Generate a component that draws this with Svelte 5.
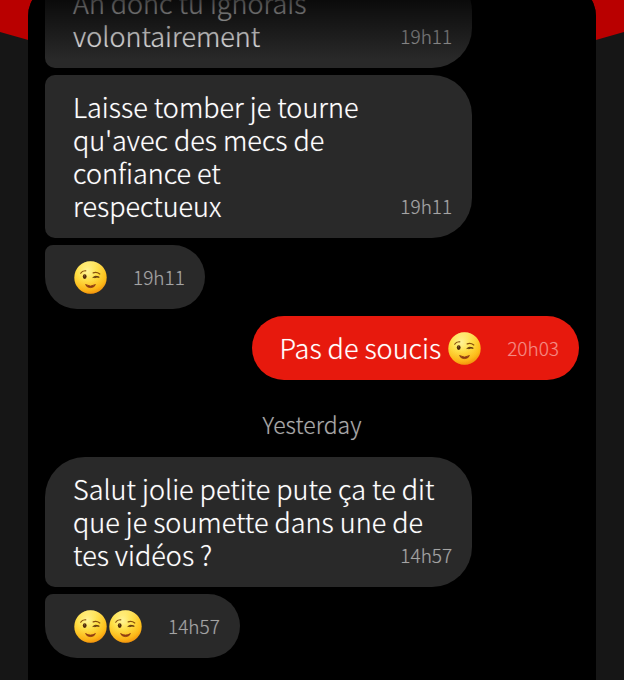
<script>
  const items = [
    { lines: ['Ah donc tu ignorais', 'volontairement'], time: '19h11', shape: 'middle' },
    { lines: ['Laisse tomber je tourne', "qu'avec des mecs de", 'confiance et', 'respectueux'], time: '19h11', shape: 'middle' },
    { lines: [''], winks: 1, time: '19h11', shape: 'last' },
    { lines: ['Pas de soucis'], winks: 1, time: '20h03', shape: 'sent' },
    { day: 'Yesterday' },
    { lines: ['Salut jolie petite pute ça te dit', 'que je soumette dans une de', 'tes vidéos ?'], time: '14h57', shape: 'first' },
    { lines: [''], winks: 2, time: '14h57', shape: 'last' }
  ];
</script>

{#snippet wink()}
  <svg class="wink" viewBox="0 -1 35 35" role="img" aria-label="Winking face">
    <circle cx="17.5" cy="17.5" r="16.2" fill="url(#face)" />
    <circle cx="17.5" cy="17.5" r="16.2" fill="url(#shade)" />
    <ellipse cx="11.7" cy="16.6" rx="1.9" ry="2.3" fill="#4f2b0b" />
    <circle cx="11.3" cy="15.8" r="0.6" fill="#a07845" />
    <path d="M7.7 13.2Q9.3 10.5 12.8 10.8" fill="none" stroke="#89500c" stroke-width="1.2" stroke-linecap="round" />
    <path d="M20.2 12.9Q23.5 11.5 26.8 14" fill="none" stroke="#89500c" stroke-width="1.2" stroke-linecap="round" />
    <path d="M19.6 17.6Q22.7 15 26.3 17.2Q23.6 16.8 21.7 17.8" fill="#5a300b" stroke="#5a300b" stroke-width="0.8" stroke-linejoin="round" />
    <path d="M12.6 24.6Q17.5 27.6 22.4 24.6Q21.4 27.6 17.5 27.6Q13.6 27.6 12.6 24.6Z" fill="#8f3b12" stroke="#8f3b12" stroke-width="0.9" stroke-linejoin="round" />
  </svg>
{/snippet}

<main class="screen">
  <svg class="backdrop" viewBox="0 0 624 80" preserveAspectRatio="none" aria-hidden="true">
    <path d="M0 0H624V32Q312 125 0 32Z" fill="#b90000" />
  </svg>
  <svg class="defs" aria-hidden="true">
    <defs>
      <radialGradient id="face" cx="0.4" cy="0.3" r="0.75">
        <stop offset="0" stop-color="#fff6a0" />
        <stop offset="0.4" stop-color="#ffe14a" />
        <stop offset="0.8" stop-color="#fdbd18" />
        <stop offset="1" stop-color="#ef8d0c" />
      </radialGradient>
      <linearGradient id="shade" x1="0" y1="0" x2="0" y2="1">
        <stop offset="0" stop-color="#fff6b0" stop-opacity="0.4" />
        <stop offset="0.4" stop-color="#ffdc3a" stop-opacity="0" />
        <stop offset="1" stop-color="#f58a08" stop-opacity="0.35" />
      </linearGradient>
    </defs>
  </svg>

  <section class="panel" aria-label="Conversation">
    {#each items as item}
      {#if item.day}
        <h2 class="day">{item.day}</h2>
      {:else}
        <article class="bubble {item.shape}" class:wide={item.lines.length > 1}>
          {#each item.lines as line, i}
            {#if i < item.lines.length - 1}
              <div class="line">{line}</div>
            {:else}
              <div class="line end">
                <span class="words">
                  {#if line}<span>{line}</span>{/if}
                  {#if item.winks}
                    <span class="winks">
                      {#each Array(item.winks) as _}{@render wink()}{/each}
                    </span>
                  {/if}
                </span>
                <time>{item.time}</time>
              </div>
            {/if}
          {/each}
        </article>
      {/if}
    {/each}
  </section>
</main>

<style>
  :global(body) {
    margin: 0;
    background: #161616;
  }
  .screen {
    position: relative;
    box-sizing: border-box;
    height: 100vh;
    padding: 0 28px;
    overflow: hidden;
    font-family: 'Noto Sans CJK SC', 'Noto Sans', sans-serif;
    font-weight: 300;
    color: #fff;
    text-shadow: 0 0 1px rgba(255, 255, 255, 0.5);
  }
  .backdrop {
    position: absolute;
    top: 0;
    left: 0;
    width: 100%;
    height: 80px;
  }
  .defs {
    position: absolute;
    width: 0;
    height: 0;
  }
  .panel {
    position: relative;
    box-sizing: border-box;
    height: calc(100% + 16px);
    margin-top: -16px;
    padding: 0 17px 22px;
    display: flex;
    flex-direction: column;
    justify-content: flex-end;
    gap: 7px;
    overflow: hidden;
    background: #000;
    border-radius: 32px 32px 0 0;
  }
  .panel::after {
    content: '';
    position: absolute;
    inset: 0 0 auto;
    height: 76px;
    background: linear-gradient(rgba(0, 0, 0, 0.95), rgba(0, 0, 0, 0.7) 25%, rgba(0, 0, 0, 0));
  }
  .bubble {
    flex: none;
    box-sizing: border-box;
    align-self: flex-start;
    max-width: 80%;
    padding: 15px 20px 16px 28px;
    background: #292929;
    border-radius: 40px;
    font-size: 27px;
    line-height: 33px;
  }
  .wide {
    width: 80%;
  }
  .middle {
    border-radius: 10px 40px 40px 10px;
  }
  .first {
    border-bottom-left-radius: 10px;
  }
  .last {
    border-top-left-radius: 10px;
  }
  .sent {
    align-self: flex-end;
    background: #e7190d;
  }
  .line {
    height: 33px;
    white-space: nowrap;
  }
  .end,
  .words,
  .winks {
    display: flex;
    align-items: center;
  }
  .end {
    justify-content: space-between;
    gap: 25px;
  }
  .words {
    gap: 6px;
  }
  .wink {
    display: block;
    width: 35px;
    height: 35px;
  }
  time {
    font-size: 19px;
    color: #a4a4a4;
    text-shadow: 0 0 1px rgba(164, 164, 164, 0.4);
  }
  .sent time {
    color: #f48a83;
    text-shadow: 0 0 1px rgba(244, 138, 131, 0.4);
  }
  .day {
    flex: none;
    margin: 21px 0 9px;
    text-align: center;
    font-size: 23px;
    line-height: 33px;
    font-weight: 300;
    color: #aaa;
    text-shadow: 0 0 1px rgba(170, 170, 170, 0.4);
  }
</style>
